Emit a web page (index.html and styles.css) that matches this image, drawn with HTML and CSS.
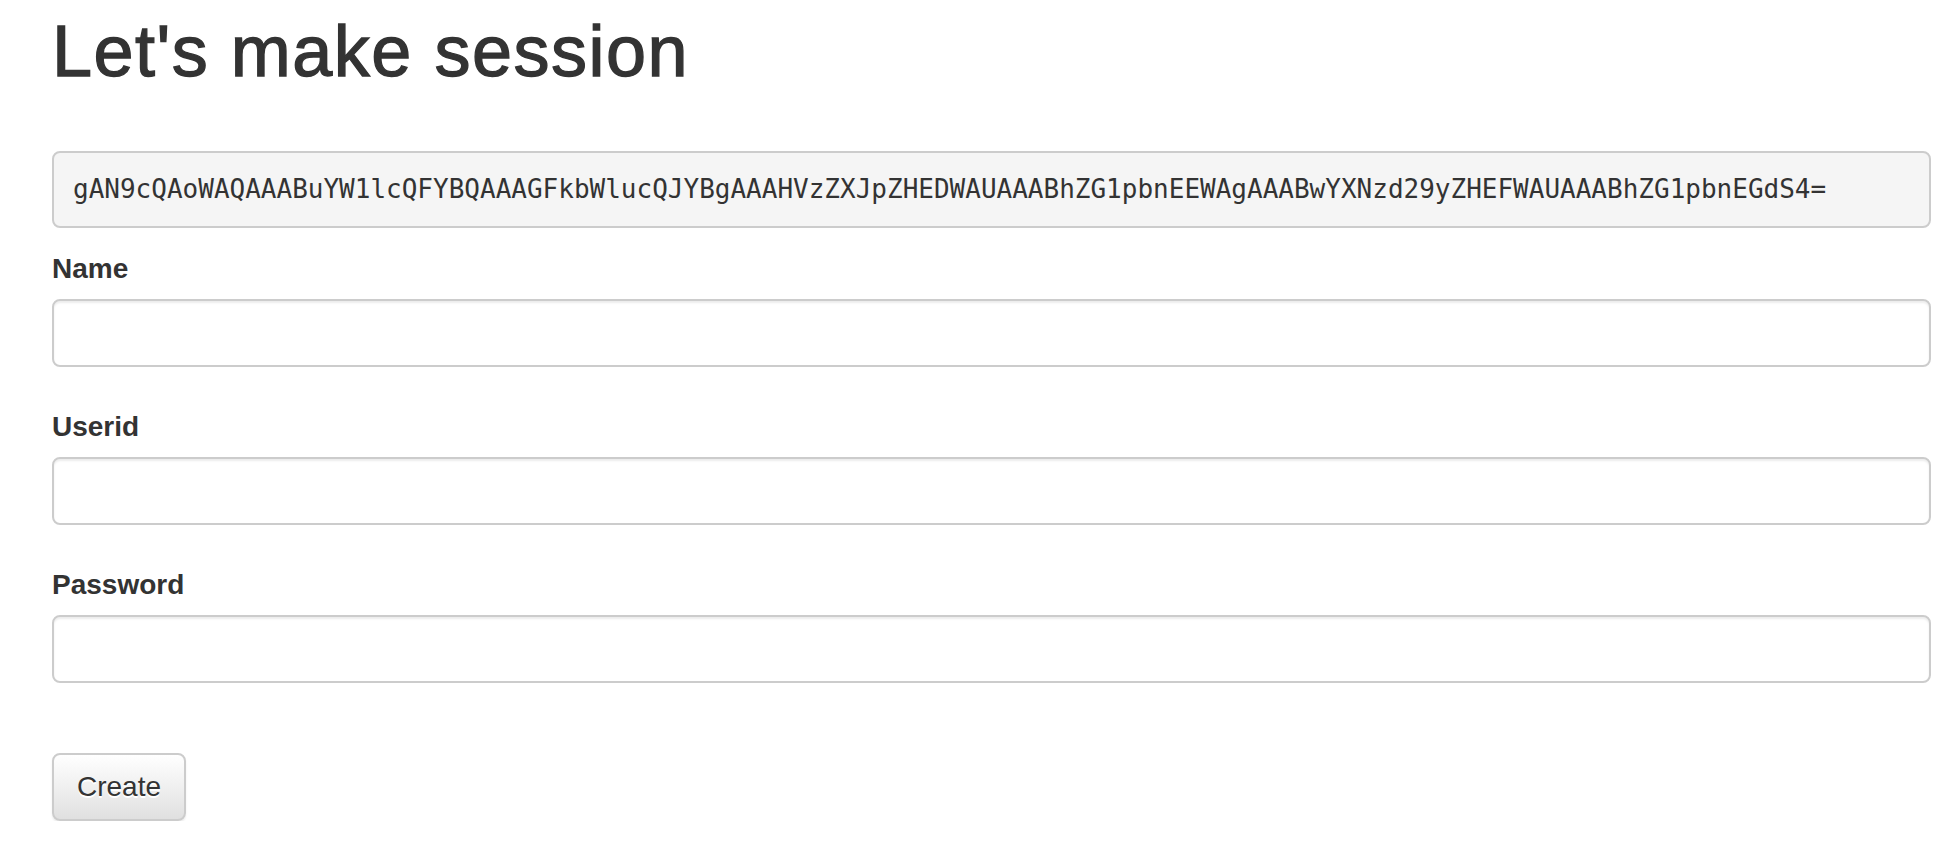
FILE: index.html
```html
<!DOCTYPE html>
<html lang="en">
<head>
<meta charset="utf-8">
<title>Let's make session</title>
<link rel="stylesheet" href="styles.css">
</head>
<body>
<div class="container">
  <h1 class="title">Let's make session</h1>
  <pre class="token">gAN9cQAoWAQAAABuYW1lcQFYBQAAAGFkbWlucQJYBgAAAHVzZXJpZHEDWAUAAABhZG1pbnEEWAgAAABwYXNzd29yZHEFWAUAAABhZG1pbnEGdS4=</pre>
  <form class="form">
    <div class="group">
      <label class="label" for="name">Name</label>
      <input class="field" id="name" type="text">
    </div>
    <div class="group">
      <label class="label" for="userid">Userid</label>
      <input class="field" id="userid" type="text">
    </div>
    <div class="group">
      <label class="label" for="password">Password</label>
      <input class="field" id="password" type="password">
    </div>
    <div class="actions">
      <button class="btn" type="button">Create</button>
    </div>
  </form>
</div>
</body>
</html>
```

FILE: styles.css
```css
html, body {
  margin: 0;
  padding: 0;
  background: #fff;
}

body {
  font-family: "Liberation Sans", Arial, Helvetica, sans-serif;
  color: #333;
}

.container {
  padding: 11px 29px 0 52px;
}

.title {
  margin: 0;
  font-size: 72px;
  line-height: 80px;
  font-weight: 400;
  letter-spacing: 1.5px;
  -webkit-text-stroke: 1.3px #333;
  color: #333;
}

.token {
  margin: 60px 0 21px 0;
  padding: 19px;
  border: 2px solid #ccc;
  border-radius: 8px;
  background: #f5f5f5;
  font-family: "DejaVu Sans Mono", "Liberation Mono", monospace;
  font-size: 26px;
  line-height: 35px;
  color: #333;
  white-space: pre;
  overflow: hidden;
}

.form {
  display: flex;
  flex-direction: column;
}

.group {
  display: flex;
  flex-direction: column;
  gap: 10px;
  margin-bottom: 40px;
}

.label {
  font-size: 28px;
  line-height: 40px;
  font-weight: 700;
  color: #333;
}

.field {
  box-sizing: border-box;
  height: 68px;
  width: 100%;
  margin: 0;
  padding: 12px 24px;
  border: 2px solid #ccc;
  border-radius: 8px;
  background: #fff;
  box-shadow: inset 0 2px 2px rgba(0, 0, 0, 0.075);
  font-family: "Liberation Sans", Arial, sans-serif;
  font-size: 28px;
  color: #555;
  outline: none;
}

.actions {
  display: flex;
  padding-top: 30px;
}

.btn {
  box-sizing: border-box;
  height: 68px;
  padding: 0 23px;
  border: 2px solid #ccc;
  border-radius: 8px;
  background: linear-gradient(to bottom, #fff 0%, #e0e0e0 100%);
  box-shadow: inset 0 2px 0 rgba(255, 255, 255, 0.15), 0 2px 2px rgba(0, 0, 0, 0.075);
  text-shadow: 0 2px 0 #fff;
  font-family: "Liberation Sans", Arial, sans-serif;
  font-size: 28px;
  line-height: 40px;
  color: #333;
  cursor: pointer;
}
```
